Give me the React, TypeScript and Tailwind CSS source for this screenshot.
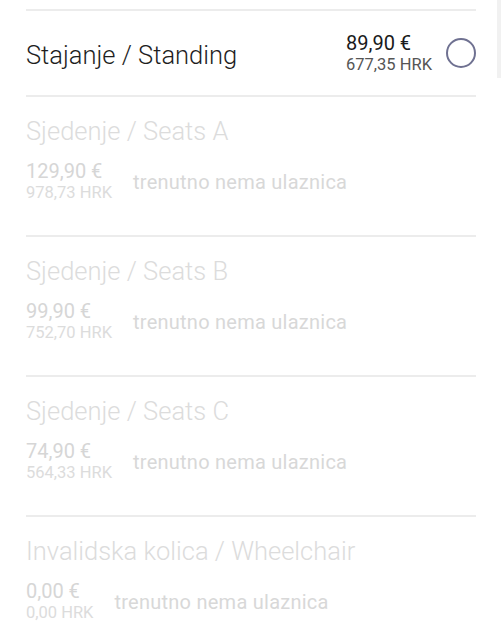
import React from "react";

const disabled = [
  { title: "Sjedenje / Seats A", eur: "129,90 €", hrk: "978,73 HRK" },
  { title: "Sjedenje / Seats B", eur: "99,90 €", hrk: "752,70 HRK" },
  { title: "Sjedenje / Seats C", eur: "74,90 €", hrk: "564,33 HRK" },
  { title: "Invalidska kolica / Wheelchair", eur: "0,00 €", hrk: "0,00 HRK" },
];

export default function App() {
  return (
    <div
      className="relative w-[501px] h-[640px] overflow-hidden bg-white"
      style={{ fontFamily: "Roboto, 'Noto Sans', sans-serif" }}
    >
      <div className="absolute right-0 top-0 w-[4px] h-[78px] bg-[#f1f1f1]" />
      <div className="ml-[26px] w-[450px] pt-[9px]">
        <div className="h-[2px] bg-[#ececec]" />
        <div className="h-[84px] flex items-center justify-between">
          <div className="text-[25.5px] leading-[28px] font-light text-[#1e1e1e] pt-[4px]">
            Stajanje / Standing
          </div>
          <div className="flex items-center gap-[14px]">
            <div className="flex flex-col">
              <span className="text-[20px] leading-[24px] text-[#1a1a1a]">89,90 €</span>
              <span className="text-[16.5px] leading-[20px] text-[#555555]">677,35 HRK</span>
            </div>
            <div className="w-[30px] h-[30px] rounded-full border-2 border-[#6f7191]" />
          </div>
        </div>
        {disabled.map((d) => (
          <div key={d.title}>
            <div className="h-[2px] bg-[#ececec]" />
            <div className="h-[138px] pt-[20px]">
              <div className="text-[25.5px] leading-[28px] font-light text-[#dcdcdc]">
                {d.title}
              </div>
              <div className="mt-[14px] flex items-center gap-[21px]">
                <div className="flex flex-col">
                  <span className="text-[20px] leading-[24px] text-[#d6d6d6]">{d.eur}</span>
                  <span className="text-[16.5px] leading-[20px] text-[#dcdcdc]">{d.hrk}</span>
                </div>
                <span className="text-[20px] leading-[24px] tracking-[0.25px] text-[#d8d8d8] pt-[2px]">
                  trenutno nema ulaznica
                </span>
              </div>
            </div>
          </div>
        ))}
      </div>
    </div>
  );
}
